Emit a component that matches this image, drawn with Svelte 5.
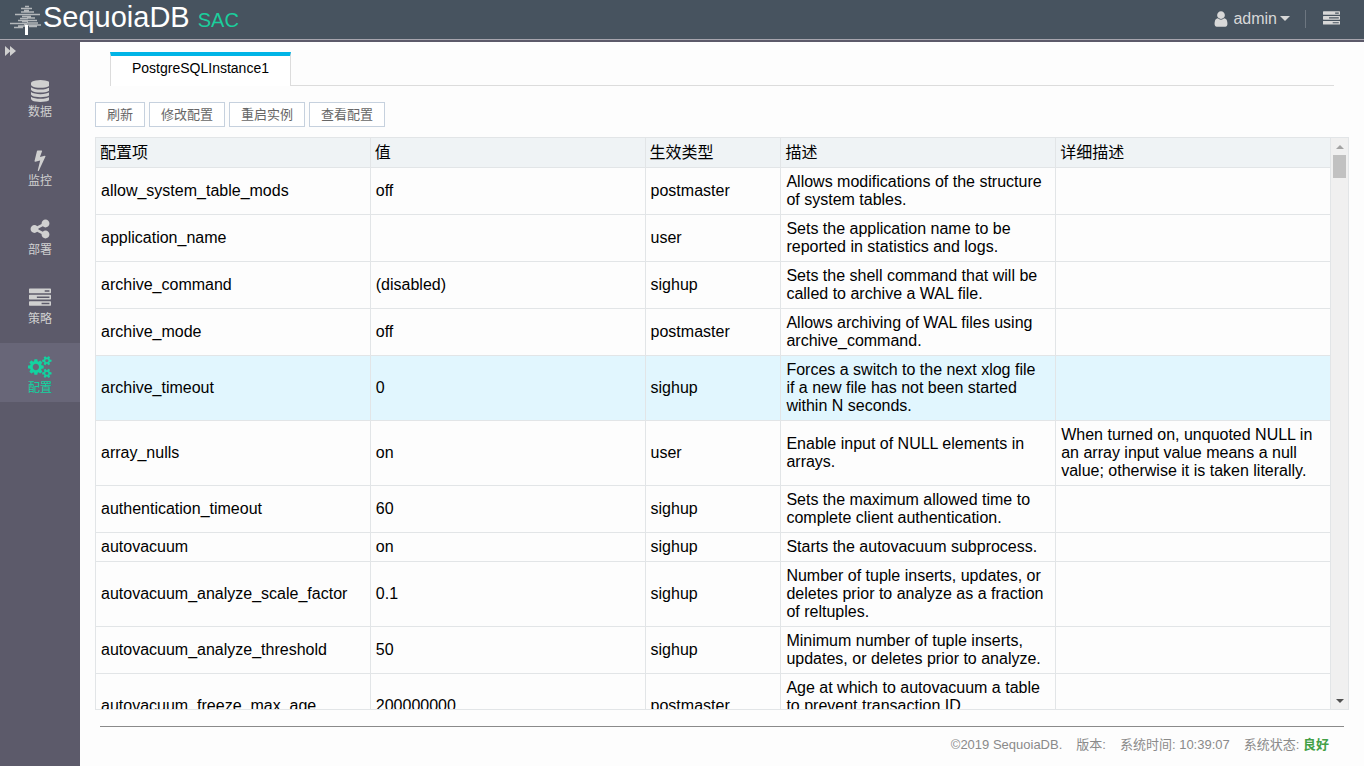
<script>
  const TREE =
    'M25 5.500h4M21 7.500h11M24 9.500h5M21 11h13M15 13.500h25M22 15.500h9M20 17.500h8M27 17h8M18 19.500h19M22 20.500h6M10 22.500h17M27 22h11M24 24h17M18 25h7M29 25.500h8M14 26.500h9';
  const SMALL_GEAR = 'v140q0 16-149 31-12 27-30 52 51 113 51 138 0 4-4 7-122 71-124 71-8 0-46-47t-52-68q-20 2-30 2t-30-2q-14 21-52 68t-46 47q-2 0-124-71-4-3-4-7 0-25 51-138-18-25-30-52-149-15-149-31v-140q0-16 149-31 13-29 30-52-51-113-51-138 0-4 4-7 4-2 35-20t59-34 30-16q8 0 46 46.5t52 67.5q20-2 30-2t30 2q51-71 92-112l6-2q4 0 124 70 4 3 4 7 0 25-51 138 17 23 30 52 149 15 149 31z';
  const BAR = 'v256q0 26-19 45t-45 19h-1664q-26 0-45-19t-19-45v-256q0-26 19-45t45-19h1664q26 0 45 19t19 45z';
  const DISC = 'q237 0 443-43t325-127v170q0 69-103 128t-280 93.5-385 34.5-385-34.5-280-93.5-103-128v-170q119 84 325 127t443 43z';
  const icons = {
    database: { w: 1536, d: `M768 768${DISC}M768 1536${DISC}M768 1152${DISC}M768 0q208 0 385 34.5t280 93.5 103 128v128q0 69-103 128t-280 93.5-385 34.5-385-34.5-280-93.5-103-128v-128q0-69 103-128t280-93.5 385-34.5z` },
    bolt: { w: 1792, d: 'M1333 566q18 20 7 44l-540 1157q-13 25-42 25-4 0-14-2-17-5-25.5-19t-4.5-30l197-808-406 101q-4 1-12 1-18 0-31-11-18-15-13-39l201-825q4-14 16-23t28-9h328q19 0 32 12.5t13 29.5q0 8-5 18l-171 463 396-98q8-2 12-2 19 0 34 15z' },
    share: { w: 1792, d: 'M1344 1024q133 0 226.5 93.5t93.5 226.5-93.5 226.5-226.5 93.5-226.5-93.5-93.5-226.5q0-12 2-34l-360-180q-92 86-218 86-133 0-226.5-93.5t-93.5-226.5 93.5-226.5 226.5-93.5q126 0 218 86l360-180q-2-22-2-34 0-133 93.5-226.5t226.5-93.5 226.5 93.5 93.5 226.5-93.5 226.5-226.5 93.5q-126 0-218-86l-360 180q2 22 2 34t-2 34l360 180q92-86 218-86z' },
    tasks: { w: 1792, d: `M1024 1408h640v-128h-640v128zM640 896h1024v-128h-1024v128zM1280 384h384v-128h-384v128zM1792 1216${BAR}M1792 704${BAR}M1792 192${BAR}` },
    cogs: { w: 1920, d: `M896 896q0-106-75-181t-181-75-181 75-75 181 75 181 181 75 181-75 75-181zm768 512q0-52-38-90t-90-38-90 38-38 90q0 53 37.5 90.5t90.5 37.5 90.5-37.5 37.5-90.5zm0-1024q0-52-38-90t-90-38-90 38-38 90q0 53 37.5 90.5t90.5 37.5 90.5-37.5 37.5-90.5zm-384 421v185q0 10-7 19.5t-16 10.5l-155 24q-11 35-32 76 34 48 90 115 7 11 7 20 0 12-7 19-23 30-82.5 89.5t-78.5 59.5q-11 0-21-7l-115-90q-37 19-77 31-11 108-23 155-7 24-30 24h-186q-11 0-20-7.5t-10-17.5l-23-153q-34-10-75-31l-118 89q-7 7-20 7-11 0-21-8-144-133-144-160 0-9 7-19 10-14 41-53t47-61q-23-44-35-82l-152-24q-10-1-17-9.5t-7-19.5v-185q0-10 7-19.5t16-10.5l155-24q11-35 32-76-34-48-90-115-7-11-7-20 0-12 7-20 22-30 82-89t79-59q11 0 21 7l115 90q34-18 77-32 11-108 23-154 7-24 30-24h186q11 0 20 7.5t10 17.5l23 153q34 10 75 31l118-89q8-7 20-7 11 0 21 8 144 133 144 160 0 8-7 19-12 16-42 54t-45 60q23 48 34 82l152 23q10 2 17 10.5t7 19.5zM1920 1338${SMALL_GEAR}M1920 314${SMALL_GEAR}` },
    user: { w: 1792, d: 'M1536 1399q0 109-62.5 187t-150.5 78h-854q-88 0-150.5-78t-62.5-187q0-85 8.5-160.5t31.5-152 58.5-131 94-89 134.5-34.5q131 128 313 128t313-128q76 0 134.5 34.5t94 89 58.5 131 31.5 152 8.5 160.5zm-256-887q0 159-112.5 271.5t-271.5 112.5-271.5-112.5-112.5-271.5 112.5-271.5 271.5-112.5 271.5 112.5 112.5 271.5z' }
  };

  const menu = [
    { label: '数据', icon: 'database' },
    { label: '监控', icon: 'bolt' },
    { label: '部署', icon: 'share' },
    { label: '策略', icon: 'tasks' },
    { label: '配置', icon: 'cogs' }
  ];
  const actions = ['刷新', '修改配置', '重启实例', '查看配置'];
  const columns = ['配置项', '值', '生效类型', '描述', '详细描述'];
  const rows = [
    ['allow_system_table_mods', 'off', 'postmaster', 'Allows modifications of the structure of system tables.', ''],
    ['application_name', '', 'user', 'Sets the application name to be reported in statistics and logs.', ''],
    ['archive_command', '(disabled)', 'sighup', 'Sets the shell command that will be called to archive a WAL file.', ''],
    ['archive_mode', 'off', 'postmaster', 'Allows archiving of WAL files using archive_command.', ''],
    ['archive_timeout', '0', 'sighup', 'Forces a switch to the next xlog file if a new file has not been started within N seconds.', ''],
    ['array_nulls', 'on', 'user', 'Enable input of NULL elements in arrays.', 'When turned on, unquoted NULL in an array input value means a null value; otherwise it is taken literally.'],
    ['authentication_timeout', '60', 'sighup', 'Sets the maximum allowed time to complete client authentication.', ''],
    ['autovacuum', 'on', 'sighup', 'Starts the autovacuum subprocess.', ''],
    ['autovacuum_analyze_scale_factor', '0.1', 'sighup', 'Number of tuple inserts, updates, or deletes prior to analyze as a fraction of reltuples.', ''],
    ['autovacuum_analyze_threshold', '50', 'sighup', 'Minimum number of tuple inserts, updates, or deletes prior to analyze.', ''],
    ['autovacuum_freeze_max_age', '200000000', 'postmaster', 'Age at which to autovacuum a table to prevent transaction ID wraparound.', '']
  ];

  let activeMenu = $state(4);
  let activeRow = $state(4);
  let scroller;
  const scrollBy = (dy) => scroller.scrollBy({ top: dy });
</script>

{#snippet icon(name, size)}
  <svg class="icon" height={size} width={(size * icons[name].w) / 1792} viewBox="0 0 {icons[name].w} 1792" aria-hidden="true">
    <path d={icons[name].d} />
  </svg>
{/snippet}

<div class="page">
  <header>
    <a class="brand" href="#home">
      <svg class="tree" width="32" height="32" viewBox="10 3 32 32" aria-hidden="true">
        <path d={TREE} />
        <path class="trunk" d="M26.500 24v10" />
      </svg>
      <span class="name">SequoiaDB</span>
      <span class="product">SAC</span>
    </a>
    <div class="tools">
      <button class="user">
        {@render icon('user', 18)}
        <span>admin</span>
        <svg width="10" height="6" viewBox="0 0 10 6" aria-hidden="true"><path d="M0 0h10l-5 5z" /></svg>
      </button>
      <button class="queue" aria-label="任务">{@render icon('tasks', 17)}</button>
    </div>
  </header>

  <div class="body">
    <nav>
      <button class="expand" aria-label="展开">
        <svg width="11" height="10" viewBox="0 0 11 10" aria-hidden="true"><path d="M0 0l5 4.500V0l6 5-6 5V5.500L0 10z" /></svg>
      </button>
      {#each menu as item, i}
        <a href="#{item.icon}" class:active={i === activeMenu} onclick={() => (activeMenu = i)}>
          <span class="glyph">{@render icon(item.icon, 22)}</span>
          <span>{item.label}</span>
        </a>
      {/each}
    </nav>

    <main>
      <div class="tabs">
        <button class="tab">PostgreSQLInstance1</button>
      </div>

      <div class="actions">
        {#each actions as label}<button>{label}</button>{/each}
      </div>

      <div class="grid">
        <div class="scroller" bind:this={scroller}>
          <table>
            <colgroup><col class="wide" /><col class="wide" /><col class="narrow" /><col class="wide" /><col class="wide" /></colgroup>
            <thead>
              <tr>{#each columns as c}<th scope="col">{c}</th>{/each}</tr>
            </thead>
            <tbody>
              {#each rows as row, i}
                <tr class:active={i === activeRow} onmouseenter={() => (activeRow = i)}>
                  {#each row as cell}<td>{cell}</td>{/each}
                </tr>
              {/each}
            </tbody>
          </table>
        </div>
        <div class="scrollbar">
          <button aria-label="向上" onclick={() => scrollBy(-47)}>
            <svg width="8" height="4" viewBox="0 0 8 4" aria-hidden="true"><path fill="#a3a3a3" d="M0 4l4-4 4 4z" /></svg>
          </button>
          <div class="thumb"></div>
          <button class="down" aria-label="向下" onclick={() => scrollBy(47)}>
            <svg width="8" height="4" viewBox="0 0 8 4" aria-hidden="true"><path fill="#505050" d="M0 0l4 4 4-4z" /></svg>
          </button>
        </div>
      </div>

      <footer>
        <span>©2019 SequoiaDB.</span>
        <span>版本:</span>
        <span>系统时间: 10:39:07</span>
        <span>系统状态: <b>良好</b></span>
      </footer>
    </main>
  </div>
</div>

<style>
  :global(body) {
    margin: 0;
  }
  .page {
    display: flex;
    flex-direction: column;
    height: 100vh;
    font: 14px/18px "Liberation Sans", "Noto Sans CJK SC", sans-serif;
    color: #000;
    background: #fdfdfd;
  }
  button {
    margin: 0;
    padding: 0;
    border: 0;
    background: none;
    font: inherit;
    color: inherit;
    cursor: pointer;
  }
  a {
    color: inherit;
    text-decoration: none;
  }
  svg {
    display: block;
    fill: currentColor;
  }

  header {
    display: flex;
    flex: none;
    justify-content: space-between;
    height: 39px;
    padding: 0 24px 0 10px;
    background: #47535f;
    border-bottom: 1px solid #a7a5ae;
    color: #d8d8d8;
  }
  .brand {
    display: flex;
    align-items: baseline;
    line-height: 34px;
  }
  .tree {
    align-self: center;
    margin-right: 1px;
    fill: none;
    stroke: #b4b8bb;
    stroke-width: 1.3;
  }
  .trunk {
    stroke: #fff;
    stroke-width: 3;
  }
  .name {
    font-size: 29px;
    color: #fff;
  }
  .product {
    margin-left: 8px;
    font-size: 20px;
    color: #1bce9c;
  }
  .tools {
    display: flex;
    align-items: center;
    padding-bottom: 2px;
  }
  .user {
    display: flex;
    align-items: center;
    gap: 3px;
    padding-right: 15px;
    font-size: 16px;
    border-right: 1px solid #6d7680;
  }
  .queue {
    padding-left: 17px;
  }

  .body {
    display: flex;
    flex: 1;
    min-height: 0;
    border-top: 2px solid #5c5a6a;
  }
  nav {
    display: flex;
    flex: none;
    flex-direction: column;
    gap: 10px;
    width: 80px;
    background: #5c5a6a;
    color: #d0d0d0;
    font-size: 12px;
    line-height: 16px;
    text-align: center;
  }
  .expand {
    height: 15px;
    padding: 4px 5px 1px;
  }
  nav a {
    display: flex;
    flex-direction: column;
    align-items: center;
    gap: 2px;
    height: 46px;
    padding-top: 13px;
  }
  nav a.active {
    background: #686678;
    color: #12d3a0;
  }
  .glyph {
    display: flex;
    align-items: center;
    height: 22px;
  }

  main {
    display: flex;
    flex: 1;
    flex-direction: column;
    min-width: 0;
    padding: 10px 15px 0;
  }
  .tabs {
    display: flex;
    height: 33px;
    margin: 0 15px;
    border-bottom: 1px solid #dcdcdc;
  }
  .tab {
    height: 34px;
    padding: 0 21px 6px;
    border: solid #dcdcdc;
    border-width: 0 1px;
    border-top: 4px solid #00b4e6;
    background: #fff;
  }
  .actions {
    display: flex;
    gap: 4px;
    padding: 16px 0 10px;
  }
  .actions button {
    height: 25px;
    padding: 0 11px;
    border: 1px solid #c6d1de;
    background: #fff;
    color: #666;
    font-size: 13px;
  }

  .grid {
    display: flex;
    flex: 1;
    min-height: 0;
    border: 1px solid #e2e5e7;
  }
  .scroller {
    flex: 1;
    overflow-y: auto;
    scrollbar-width: none;
  }
  table {
    width: 100%;
    table-layout: fixed;
    border-collapse: separate;
    border-spacing: 0;
    font-size: 16px;
  }
  .wide {
    width: 22.25%;
  }
  .narrow {
    width: 11%;
  }
  th,
  td {
    border: solid #e2e5e7;
    border-width: 0 1px 1px 0;
    text-align: left;
    vertical-align: middle;
  }
  th {
    position: sticky;
    top: 0;
    height: 29px;
    padding: 0 4px;
    background: #eff3f5;
    font-weight: normal;
  }
  td {
    padding: 5px 8px 5px 5px;
  }
  tr.active td {
    background: #e1f6fe;
  }
  .scrollbar {
    display: flex;
    flex: none;
    flex-direction: column;
    width: 17px;
    background: #f0f0f0;
  }
  .scrollbar button {
    display: flex;
    align-items: center;
    justify-content: center;
    height: 17px;
  }
  .down {
    margin-top: auto;
  }
  .thumb {
    height: 23px;
    margin: 0 2px;
    background: #c1c1c1;
  }

  footer {
    display: flex;
    flex: none;
    justify-content: flex-end;
    gap: 14px;
    height: 30px;
    margin: 16px 5px 0;
    padding: 9px 15px 0;
    border-top: 1px solid #8a8a8a;
    color: #8a8a8a;
    font-size: 13px;
  }
  footer b {
    color: #43a047;
  }
</style>
